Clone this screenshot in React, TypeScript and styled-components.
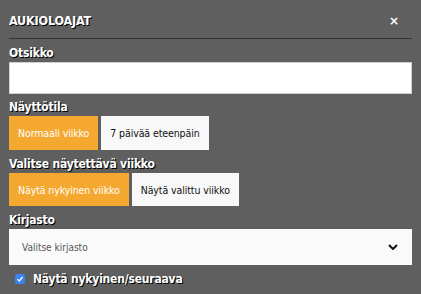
import styled, { createGlobalStyle } from "styled-components";

const GlobalStyle = createGlobalStyle`
	html, body {
		margin: 0;
		padding: 0;
		background: #5f5f5f;
	}
	body {
		font-family: "DejaVu Sans Condensed", "DejaVu Sans", sans-serif;
	}
`;

const Panel = styled.div`
	width: 421px;
	height: 294px;
	box-sizing: border-box;
	padding: 13px 9px 0 9px;
	background: #5f5f5f;
	overflow: hidden;
`;

const Header = styled.div`
	display: flex;
	justify-content: space-between;
	align-items: flex-start;
	height: 25px;
	border-bottom: 1px solid #333;
`;

const Title = styled.h2`
	margin: 0;
	font-size: 12.5px;
	line-height: 16px;
	font-weight: 700;
	color: #fff;
	letter-spacing: -0.2px;
	text-shadow: 1px 1px 0 #000;
`;

const Close = styled.button`
	border: 0;
	background: none;
	color: #fff;
	font-family: "DejaVu Sans", sans-serif;
	font-size: 12px;
	line-height: 16px;
	font-weight: 700;
	padding: 0 13px 0 0;
	cursor: pointer;
`;

const Label = styled.label<{ top?: number }>`
	display: block;
	margin: ${(props) => props.top ?? 7}px 0 2px;
	font-size: 12px;
	line-height: 14px;
	font-weight: 700;
	color: #fff;
	letter-spacing: -0.2px;
	text-shadow: 1px 1px 0 #000;
`;

const TextInput = styled.input`
	display: block;
	width: 100%;
	height: 32px;
	box-sizing: border-box;
	border: 1px solid #d0d0d0;
	background: #fff;
	outline: none;
`;

const ButtonRow = styled.div`
	display: flex;
	gap: 3px;
`;

const Toggle = styled.button<{ active?: boolean; tall?: boolean }>`
	height: ${(props) => (props.tall ? "34px" : "33px")};
	padding: 0 9px;
	border: 0;
	background: ${(props) => (props.active ? "#f5a830" : "#f8f8f8")};
	color: ${(props) => (props.active ? "#fff" : "#111")};
	font-family: inherit;
	font-size: 10.5px;
	letter-spacing: -0.1px;
	cursor: pointer;
`;

const SelectBox = styled.div`
	display: flex;
	align-items: center;
	justify-content: space-between;
	height: 36px;
	padding: 0 14px 0 13px;
	background: #fafafa;
	color: #555;
	font-size: 10px;
`;

const CheckRow = styled.label`
	display: flex;
	align-items: center;
	gap: 8px;
	margin: 9px 0 0 6px;
	font-size: 12px;
	line-height: 10px;
	font-weight: 700;
	color: #fff;
	letter-spacing: -0.2px;
	text-shadow: 1px 1px 0 #000;
`;

const CheckBox = styled.span`
	display: inline-flex;
	align-items: center;
	justify-content: center;
	width: 10px;
	height: 10px;
	border-radius: 2px;
	background: #3b82f6;
`;

const App = () => {
	return (
		<>
			<GlobalStyle />
			<Panel>
				<Header>
					<Title>AUKIOLOAJAT</Title>
					<Close>×</Close>
				</Header>
				<Label top={7}>Otsikko</Label>
				<TextInput type="text" />
				<Label top={6}>Näyttötila</Label>
				<ButtonRow>
					<Toggle active tall>Normaali viikko</Toggle>
					<Toggle tall>7 päivää eteenpäin</Toggle>
				</ButtonRow>
				<Label>Valitse näytettävä viikko</Label>
				<ButtonRow>
					<Toggle active>Näytä nykyinen viikko</Toggle>
					<Toggle>Näytä valittu viikko</Toggle>
				</ButtonRow>
				<Label>Kirjasto</Label>
				<SelectBox>
					<span>Valitse kirjasto</span>
					<svg width="10" height="6" viewBox="0 0 10 6">
						<path d="M1 1l4 4 4-4" fill="none" stroke="#111" strokeWidth="2" />
					</svg>
				</SelectBox>
				<CheckRow>
					<CheckBox>
						<svg width="8" height="8" viewBox="0 0 8 8">
							<path d="M1.5 4.2l1.8 1.8 3.2-4" fill="none" stroke="#fff" strokeWidth="1.3" />
						</svg>
					</CheckBox>
					Näytä nykyinen/seuraava
				</CheckRow>
			</Panel>
		</>
	);
};

export default App;
